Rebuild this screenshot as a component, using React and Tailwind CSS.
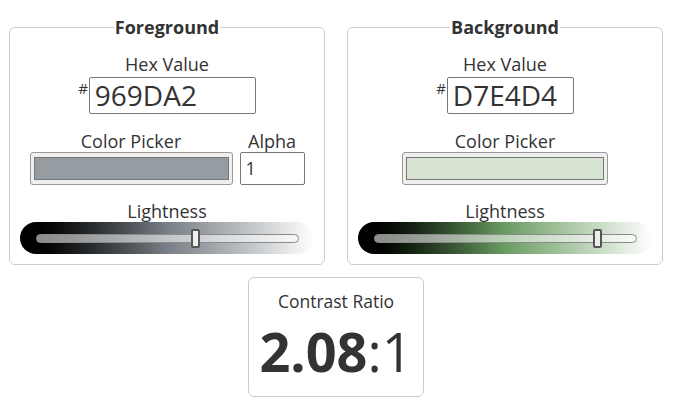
import React from 'react';

const panels = [
  {
    title: 'Foreground',
    hex: '969DA2',
    hexWidth: 'w-[167px]',
    pickerWidth: 'w-[203px]',
    swatch: 'bg-[#969DA2]',
    gradient: 'bg-linear-to-r from-black via-[#787f86] to-white',
    alpha: true,
  },
  {
    title: 'Background',
    hex: 'D7E4D4',
    hexWidth: 'w-[127px]',
    pickerWidth: 'w-[206px]',
    swatch: 'bg-[#D7E4D4]',
    gradient: 'bg-linear-to-r from-black via-[#6a9d62] to-white',
    alpha: false,
  },
];

// lightness (0..1) from a hex string
const lightness = (hex) => {
  const n = [0, 2, 4].map((i) => parseInt(hex.slice(i, i + 2), 16) / 255);
  return (Math.max(...n) + Math.min(...n)) / 2;
};

const Slider = ({ hex, gradient }) => {
  const track = 264;
  const thumb = 9;
  const left = lightness(hex) * (track - thumb) - 2;
  return (
    <div className={`h-[32px] rounded-l-full rounded-r-full flex items-center pl-[16px] pr-[15px] ${gradient}`}>
      <div className="relative w-full h-[9px] rounded-full border border-[#8a8a8a] bg-white/55">
        <div
          className="absolute top-[-6px] w-[9px] h-[19px] rounded-[2px] border-2 border-[#555] bg-[#eee]"
          style={{ left: `${left}px` }}
        ></div>
      </div>
    </div>
  );
};

const Panel = ({ p }) => (
  <fieldset className="w-[316px] border border-[#ccc] rounded-[6px] px-0 pb-[10px]">
    <legend className="mx-auto px-[1px] text-[18px] leading-[22px] font-bold text-[#333]">
      {p.title}
    </legend>

    <div className="mt-[15px] text-center text-[18px] leading-[22px]">Hex Value</div>
    <div className="mt-[2px] flex justify-center items-start">
      <span className="text-[15px] leading-[15px] mt-[4px] mr-[1px]">#</span>
      <div className={`${p.hexWidth} h-[37px] border border-[#767676] rounded-[2px] px-[5px] text-[28px] leading-[35px]`}>
        {p.hex}
      </div>
    </div>

    <div className="mt-[16px] flex justify-center gap-[7px]">
      <div className="flex flex-col items-center">
        <div className="text-[18px] leading-[22px]">Color Picker</div>
        <div className={`${p.pickerWidth} h-[33px] border border-[#999] rounded-[3px] bg-[#efefef] px-[3px] py-[4px]`}>
          <div className={`h-full border border-[#777] ${p.swatch}`}></div>
        </div>
      </div>
      {p.alpha && (
        <div className="flex flex-col items-center">
          <div className="text-[18px] leading-[22px]">Alpha</div>
          <div className="w-[65px] h-[33px] border border-[#767676] rounded-[2px] px-[5px] text-[18px] leading-[31px]">
            1
          </div>
        </div>
      )}
    </div>

    <div className="mt-[15px] text-center text-[18px] leading-[22px]">Lightness</div>
    <div className="px-[10px]">
      <Slider hex={p.hex} gradient={p.gradient} />
    </div>
  </fieldset>
);

export default function App() {
  return (
    <div className="w-[676px] h-[403px] bg-white text-[#333] font-['Open_Sans',sans-serif] pt-[16px] pl-[9px]">
      <div className="w-[654px]">
        <div className="flex gap-[22px]">
          {panels.map((p) => (
            <Panel key={p.title} p={p} />
          ))}
        </div>
        <div className="mx-auto mt-[12px] w-[176px] h-[120px] border border-[#ccc] rounded-[6px] flex flex-col items-center">
          <div className="mt-[12px] text-[17.5px] leading-[22px]">Contrast Ratio</div>
          <div className="mt-[12px] text-[54px] leading-[54px]">
            <span className="font-bold">2.08</span>
            <span className="font-normal">:1</span>
          </div>
        </div>
      </div>
    </div>
  );
}
